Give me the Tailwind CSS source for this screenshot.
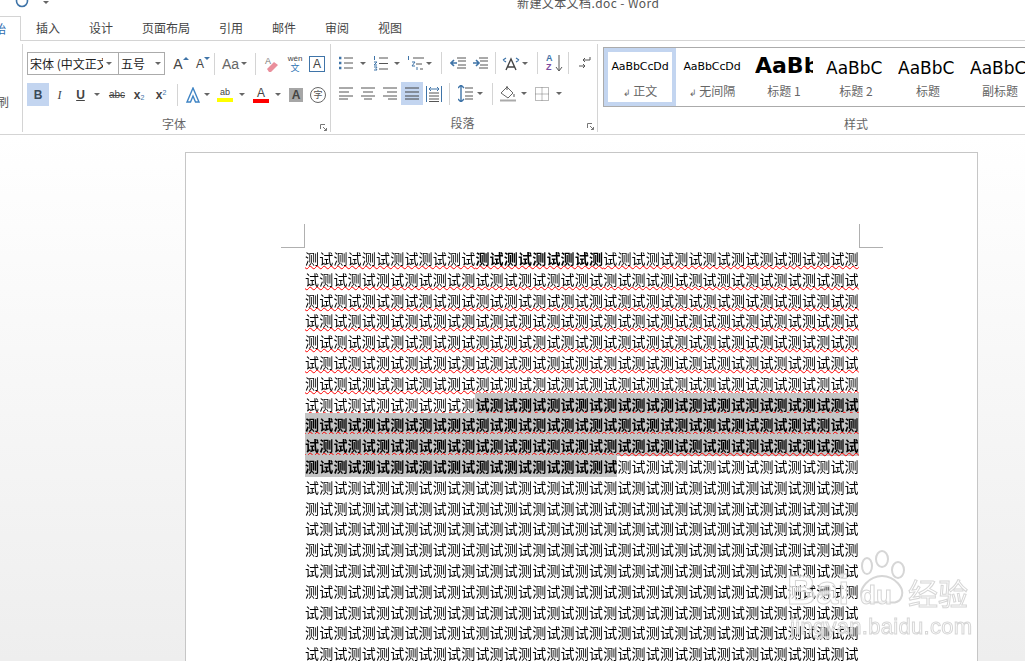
<!DOCTYPE html>
<html lang="zh-CN">
<head>
<meta charset="UTF-8" />
<title>新建文本文档.doc - Word</title>
<script src="https://cdn.jsdelivr.net/npm/@tailwindcss/browser@4"></script>
</head>
<body class="bg-white">
<div class="relative w-[1025px] h-[661px] overflow-hidden flex flex-col text-[#444] font-['Noto_Sans_CJK_SC','Noto_Sans',sans-serif]">

  <!-- title bar -->
  <div class="h-[16px] shrink-0 flex overflow-hidden">
    <svg class="ml-[15px] -mt-[8px] w-[14px] h-[16px]" viewBox="0 0 14 16" fill="none" stroke="#3f74a8" stroke-width="1.6"><circle cx="7" cy="9" r="5.5"/></svg>
    <div class="ml-[13px] -mt-[1px] w-[8px] flex flex-col items-center gap-[1px]">
      <div class="w-[6px] h-[1px] bg-[#666]"></div>
      <div class="w-0 h-0 border-x-[3px] border-x-transparent border-t-[3px] border-t-[#666]"></div>
    </div>
    <div class="ml-[467px] -mt-[3px] text-[12px] leading-[12px] text-[#555] tracking-[0.4px] whitespace-nowrap">新建文本文档.doc - Word</div>
  </div>

  <!-- tabs -->
  <div class="h-[25px] shrink-0 flex text-[12px] leading-[24px] text-[#444]">
    <div class="w-[21px] h-[25px] bg-white border-r border-t border-[#d4d4d4] overflow-hidden text-[#2b6cb0] relative z-10"><span class="block -ml-[6px] whitespace-nowrap">始</span></div>
    <div class="ml-[15px] w-[53px]">插入</div>
    <div class="w-[53px]">设计</div>
    <div class="w-[77px]">页面布局</div>
    <div class="w-[53px]">引用</div>
    <div class="w-[53px]">邮件</div>
    <div class="w-[53px]">审阅</div>
    <div class="w-[48px]">视图</div>
  </div>

  <!-- ribbon -->
  <div class="h-[95px] shrink-0 -mt-[1px] border-t border-b border-[#d4d4d4] flex bg-white">

    <!-- clipboard -->
    <div class="w-[23px] h-[88px] mt-[3px] border-r border-[#d4d4d4] overflow-hidden relative">
      <div class="mt-[50px] -ml-[3px] text-[12px] leading-[16px] text-[#555]">刷</div>
    </div>

    <!-- font -->
    <div class="w-[308px] h-[88px] mt-[3px] border-r border-[#d4d4d4] pl-[4px] flex flex-col">
      <div class="h-[23px] mt-[8px] flex items-center">
        <div class="w-[92px] h-[23px] border border-[#ababab] flex items-center overflow-hidden">
          <span class="ml-[2px] w-[73px] overflow-hidden whitespace-nowrap text-[12px] text-[#222]">宋体 (中文正文)</span>
          <span class="ml-[3px] w-0 h-0 border-x-[3px] border-x-transparent border-t-[3px] border-t-[#666]"></span>
        </div>
        <div class="-ml-[1px] w-[47px] h-[23px] border border-[#ababab] flex items-center">
          <span class="ml-[2px] w-[34px] text-[12px] text-[#222]">五号</span>
          <span class="w-0 h-0 border-x-[3px] border-x-transparent border-t-[3px] border-t-[#666]"></span>
        </div>
        <div class="ml-[5px] w-[22px] flex items-start justify-center text-[14px] leading-[16px] font-['Liberation_Sans']"><span>A</span><span class="mt-[1px] w-0 h-0 border-x-[3px] border-x-transparent border-b-[3px] border-b-[#3f74a8]"></span></div>
        <div class="w-[22px] flex items-start justify-center text-[12px] leading-[16px] mt-[1px] font-['Liberation_Sans']"><span>A</span><span class="mt-[1px] w-0 h-0 border-x-[3px] border-x-transparent border-t-[3px] border-t-[#3f74a8]"></span></div>
        <div class="w-px h-[22px] bg-[#d4d4d4]"></div>
        <div class="ml-[7px] w-[16px] text-[14px] leading-[16px] text-[#666] font-['Liberation_Sans']">Aa</div>
        <span class="ml-[3px] w-0 h-0 border-x-[3px] border-x-transparent border-t-[3px] border-t-[#666]"></span>
        <div class="ml-[8px] w-px h-[22px] bg-[#d4d4d4]"></div>
        <svg class="ml-[8px] w-[16px] h-[18px]" viewBox="0 0 16 18"><text x="1" y="9" font-size="9" fill="#777" font-family="Liberation Sans">A</text><path d="M3 14l7-7 4 3-7 7H5z" fill="#ea8f9c"/></svg>
        <div class="ml-[6px] w-[18px] flex flex-col items-center text-[8px] leading-[8px]"><span class="text-[#444] font-['Liberation_Sans']">wén</span><span class="text-[#2f75b5] text-[9px] leading-[9px]">文</span></div>
        <div class="ml-[5px] w-[16px] h-[16px] border border-[#3f74a8] flex items-center justify-center text-[12px] leading-none text-[#444] font-['Liberation_Sans']">A</div>
      </div>
      <div class="h-[23px] mt-[8px] flex items-center font-['Liberation_Sans']">
        <div class="w-[22px] h-[23px] bg-[#c3d5f0] flex items-center justify-center text-[12px] font-bold text-[#3a4a5a]">B</div>
        <div class="w-[21px] text-center text-[12px] italic font-['Liberation_Serif']">I</div>
        <div class="w-[21px] text-center text-[12px] font-bold underline">U</div>
        <span class="ml-[3px] w-0 h-0 border-x-[3px] border-x-transparent border-t-[3px] border-t-[#666]"></span>
        <div class="ml-[6px] w-[22px] text-center text-[10px] line-through">abc</div>
        <div class="w-[22px] text-center text-[12px] font-bold">x<sub class="text-[7px] text-[#3f74a8] font-normal">2</sub></div>
        <div class="w-[22px] text-center text-[12px] font-bold">x<sup class="text-[7px] text-[#3f74a8] font-normal">2</sup></div>
        <div class="ml-[5px] w-px h-[22px] bg-[#d4d4d4]"></div>
        <svg class="ml-[7px] w-[16px] h-[16px]" viewBox="0 0 16 16"><path d="M2 15L8 1l6 14h-3.500l-2.500-6-2.500 6z" fill="#fff" stroke="#3f84c4" stroke-width="1.400"/></svg>
        <span class="ml-[3px] w-0 h-0 border-x-[3px] border-x-transparent border-t-[3px] border-t-[#666]"></span>
        <div class="ml-[7px] w-[16px] flex flex-col items-center">
          <span class="text-[9px] leading-[11px] text-[#444]">ab</span>
          <span class="w-[16px] h-[4px] bg-[#ffff00]"></span>
        </div>
        <span class="ml-[6px] w-0 h-0 border-x-[3px] border-x-transparent border-t-[3px] border-t-[#666]"></span>
        <div class="ml-[8px] w-[16px] flex flex-col items-center">
          <span class="text-[12px] leading-[12px] text-[#444]">A</span>
          <span class="w-[16px] h-[4px] bg-[#ff0000]"></span>
        </div>
        <span class="ml-[6px] w-0 h-0 border-x-[3px] border-x-transparent border-t-[3px] border-t-[#666]"></span>
        <div class="ml-[8px] w-[14px] h-[14px] bg-[#a6a6a6] flex items-center justify-center text-[12px] font-bold text-[#444]">A</div>
        <div class="ml-[7px] w-[16px] h-[16px] rounded-full border border-[#666] flex items-center justify-center text-[9px] text-[#555] font-['Noto_Sans_CJK_SC']">字</div>
      </div>
      <div class="relative mt-[9px] h-[18px] text-center text-[12px] leading-[18px] text-[#666] pr-[9px]">字体
        <svg class="absolute right-[3px] top-[9px] w-[7px] h-[7px]" viewBox="0 0 7 7" fill="none" stroke="#777"><path d="M.5 5V.5H5M3 3l3.500 3.500M6.500 4v2.500H4"/></svg>
      </div>
    </div>

    <!-- paragraph -->
    <div class="w-[267px] h-[88px] mt-[3px] border-r border-[#d4d4d4] flex flex-col">
      <div class="h-[23px] mt-[8px] flex items-center">
        <svg class="ml-[8px] w-[14px] h-[14px]" viewBox="0 0 14 14" stroke="#555"><path d="M5 2h9M5 7h9M5 12h9"/><path stroke="#3f74a8" stroke-width="2.400" d="M0 2h2.400M0 7h2.400M0 12h2.400"/></svg>
        <span class="ml-[7px] w-0 h-0 border-x-[3px] border-x-transparent border-t-[3px] border-t-[#666]"></span>
        <svg class="ml-[7px] w-[15px] h-[15px]" viewBox="0 0 15 15" stroke="#555"><path d="M6 2h9M6 7.500h9M6 13h9"/><path stroke="#3f74a8" fill="none" d="M1.500 0v4M1 6h3L1 9h3M1 11h3l-1 1.500 1 1.500H1"/></svg>
        <span class="ml-[6px] w-0 h-0 border-x-[3px] border-x-transparent border-t-[3px] border-t-[#666]"></span>
        <svg class="ml-[7px] w-[17px] h-[15px]" viewBox="0 0 17 15" stroke="#555"><path d="M6 2h11M9 8h6M13 13h3"/><path stroke="#3f74a8" fill="none" d="M1.500 0v4M5 6h3L5 10h3M10 11v3"/></svg>
        <span class="ml-[2px] w-0 h-0 border-x-[3px] border-x-transparent border-t-[3px] border-t-[#666]"></span>
        <div class="ml-[9px] w-px h-[22px] bg-[#d4d4d4]"></div>
        <svg class="ml-[8px] w-[16px] h-[12px]" viewBox="0 0 16 12" stroke="#555"><path d="M7 1h9M8 4h8M8 8h8M7 11h9"/><path stroke="#3f74a8" stroke-width="1.600" d="M7 6H1M4 3L1 6l3 3" fill="none"/></svg>
        <svg class="ml-[6px] w-[16px] h-[12px]" viewBox="0 0 16 12" stroke="#555"><path d="M7 1h9M8 4h8M8 8h8M7 11h9"/><path stroke="#3f74a8" stroke-width="1.600" d="M1 6h6M4 3l3 3-3 3" fill="none"/></svg>
        <div class="ml-[7px] w-px h-[22px] bg-[#d4d4d4]"></div>
        <svg class="ml-[6px] w-[18px] h-[15px]" viewBox="0 0 18 15" fill="none"><path d="M4 14L9 3l5 11M5.500 11h7" stroke="#444" stroke-width="1.400"/><path d="M1 4l3-2M1 4l3 2M17 4l-3-2M17 4l-3 2" stroke="#3f74a8" stroke-width="1.200"/></svg>
        <span class="ml-[2px] w-0 h-0 border-x-[3px] border-x-transparent border-t-[3px] border-t-[#666]"></span>
        <div class="ml-[9px] w-px h-[22px] bg-[#d4d4d4]"></div>
        <div class="ml-[8px] w-[9px] flex flex-col text-[9px] leading-[9px] font-['Liberation_Sans'] font-bold"><span class="text-[#3f74a8]">A</span><span class="text-[#7b4a9e]">Z</span></div>
        <svg class="w-[8px] h-[17px]" viewBox="0 0 8 17" fill="none" stroke="#555"><path d="M4 0v15M1 12l3 4 3-4"/></svg>
        <div class="ml-[5px] w-px h-[22px] bg-[#d4d4d4]"></div>
        <svg class="ml-[10px] w-[12px] h-[14px]" viewBox="0 0 12 14" fill="none" stroke="#555"><path d="M11 1v3H4M6 2L4 4l2 2"/><path d="M0 10h6M4 8l2 2-2 2"/></svg>
      </div>
      <div class="h-[23px] mt-[8px] flex items-center">
        <svg class="ml-[8px] w-[14px] h-[13px]" viewBox="0 0 14 13" stroke="#555"><path d="M0 1h14M0 5h10M0 9h14M0 12h9"/></svg>
        <svg class="ml-[8px] w-[14px] h-[13px]" viewBox="0 0 14 13" stroke="#555"><path d="M0 1h14M2 5h10M0 9h14M3 12h8"/></svg>
        <svg class="ml-[8px] w-[14px] h-[13px]" viewBox="0 0 14 13" stroke="#555"><path d="M0 1h14M4 5h10M0 9h14M5 12h9"/></svg>
        <div class="ml-[4px] w-[22px] h-[23px] bg-[#c3d5f0] flex items-center justify-center">
          <svg class="w-[14px] h-[13px]" viewBox="0 0 14 13" stroke="#444"><path d="M0 1h14M0 5h14M0 9h14M0 12h14"/></svg>
        </div>
        <svg class="ml-[3px] w-[16px] h-[16px]" viewBox="0 0 16 16" fill="none" stroke="#555"><path d="M3 7h10M3 10h10M3 13h10M3 15.500h10"/><path stroke="#3f74a8" d="M.5 0v16M15.500 0v16M3 3h10M5 1L3 3l2 2M11 1l2 2-2 2"/></svg>
        <div class="ml-[7px] w-px h-[22px] bg-[#d4d4d4]"></div>
        <svg class="ml-[8px] w-[15px] h-[17px]" viewBox="0 0 15 17" fill="none" stroke="#555"><path d="M7 3h8M7 7h8M7 11h8M7 14h8"/><path stroke="#3f74a8" stroke-width="1.400" d="M3 0v17M0 3l3-3 3 3M0 14l3 3 3-3"/></svg>
        <span class="ml-[4px] w-0 h-0 border-x-[3px] border-x-transparent border-t-[3px] border-t-[#666]"></span>
        <div class="ml-[9px] w-px h-[22px] bg-[#d4d4d4]"></div>
        <svg class="ml-[7px] w-[16px] h-[17px]" viewBox="0 0 16 17" fill="none" stroke="#666"><path d="M1 8l6-6 6 6-5 5z"/><path d="M7 1v4M14 9v3" stroke="#555"/><path d="M0 15.500h16" stroke-width="2" stroke="#aaa"/></svg>
        <span class="ml-[5px] w-0 h-0 border-x-[3px] border-x-transparent border-t-[3px] border-t-[#666]"></span>
        <svg class="ml-[8px] w-[14px] h-[14px]" viewBox="0 0 14 14" fill="none" stroke="#777" stroke-dasharray="1 1"><path d="M.5.500h13v13H.500zM7 .500v13M.500 7h13"/></svg>
        <span class="ml-[7px] w-0 h-0 border-x-[3px] border-x-transparent border-t-[3px] border-t-[#666]"></span>
      </div>
      <div class="relative mt-[9px] h-[18px] text-center text-[12px] leading-[18px] text-[#666] pr-[3px]">段落
        <svg class="absolute right-[3px] top-[9px] w-[7px] h-[7px]" viewBox="0 0 7 7" fill="none" stroke="#777"><path d="M.5 5V.5H5M3 3l3.500 3.500M6.500 4v2.500H4"/></svg>
      </div>
    </div>

    <!-- styles -->
    <div class="flex-1 min-w-0 flex flex-col pl-[5px] overflow-hidden">
      <div class="mt-[6px] h-[60px] w-[430px] border border-[#ababab] flex text-[#666]">
        <div class="w-[72px] h-[58px] shrink-0 border-[4px] border-[#c3d5f0] flex flex-col items-center">
          <div class="h-[29px] text-[11px] leading-[30px] text-black font-['DejaVu_Sans'] tracking-[-0.1px] whitespace-nowrap">AaBbCcDd</div>
          <div class="text-[12px] leading-[20px]"><span class="text-[9px]">↲</span> 正文</div>
        </div>
        <div class="w-[72px] h-[58px] shrink-0 flex flex-col items-center pt-[4px]">
          <div class="h-[29px] text-[11px] leading-[30px] text-black font-['DejaVu_Sans'] tracking-[-0.1px] whitespace-nowrap">AaBbCcDd</div>
          <div class="text-[12px] leading-[20px]"><span class="text-[9px]">↲</span> 无间隔</div>
        </div>
        <div class="w-[72px] h-[58px] shrink-0 flex flex-col items-center pt-[4px]">
          <div class="h-[29px] w-[58px] overflow-hidden text-[22px] leading-[28px] font-bold text-black font-['DejaVu_Sans'] whitespace-nowrap">AaBbCc</div>
          <div class="text-[12px] leading-[20px]">标题 1</div>
        </div>
        <div class="w-[72px] h-[58px] shrink-0 flex flex-col items-center pt-[4px]">
          <div class="h-[29px] w-[60px] overflow-hidden text-[17px] leading-[32px] text-black font-['DejaVu_Sans'] whitespace-nowrap">AaBbC</div>
          <div class="text-[12px] leading-[20px]">标题 2</div>
        </div>
        <div class="w-[72px] h-[58px] shrink-0 flex flex-col items-center pt-[4px]">
          <div class="h-[29px] w-[60px] overflow-hidden text-[17px] leading-[32px] text-black font-['DejaVu_Sans'] whitespace-nowrap">AaBbC</div>
          <div class="text-[12px] leading-[20px]">标题</div>
        </div>
        <div class="w-[72px] h-[58px] shrink-0 flex flex-col items-center pt-[4px]">
          <div class="h-[29px] w-[60px] overflow-hidden text-[17px] leading-[32px] text-black font-['DejaVu_Sans'] whitespace-nowrap">AaBbCc</div>
          <div class="text-[12px] leading-[20px]">副标题</div>
        </div>
      </div>
      <div class="mt-[8px] w-[486px] pl-[241px] text-[12px] leading-[18px] text-[#666]">样式</div>
    </div>
  </div>

  <!-- document -->
  <div class="flex-1 min-h-0 bg-gradient-to-b from-white to-[#eeeeee] pt-[17px] pl-[185px]">
    <div class="w-[793px] h-[600px] bg-white border border-[#c6c6c6] pl-[95px] pt-[71px]">
      <div class="w-[602px] flex justify-between">
        <div class="w-[24px] h-[24px] border-r border-b border-[#b0b0b0]"></div>
        <div class="w-[24px] h-[24px] border-l border-b border-[#b0b0b0]"></div>
      </div>
      <div class="ml-[24px] w-[560px] text-[14px] leading-[20.8px] tracking-[0.2px] text-black whitespace-nowrap will-change-transform">
        <p class="underline decoration-wavy decoration-[#ff0000] decoration-[1px] underline-offset-[1px]">测试测试测试测试测试测试<span class="font-bold">测试测试测试测试测</span>试测试测试测试测试测试测试测试测试测</p>
        <p class="underline decoration-wavy decoration-[#ff0000] decoration-[1px] underline-offset-[1px]">试测试测试测试测试测试测试测试测试测试测试测试测试测试测试测试测试测试测试测试</p>
        <p class="underline decoration-wavy decoration-[#ff0000] decoration-[1px] underline-offset-[1px]">测试测试测试测试测试测试测试测试测试测试测试测试测试测试测试测试测试测试测试测</p>
        <p class="underline decoration-wavy decoration-[#ff0000] decoration-[1px] underline-offset-[1px]">试测试测试测试测试测试测试测试测试测试测试测试测试测试测试测试测试测试测试测试</p>
        <p class="underline decoration-wavy decoration-[#ff0000] decoration-[1px] underline-offset-[1px]">测试测试测试测试测试测试测试测试测试测试测试测试测试测试测试测试测试测试测试测</p>
        <p class="underline decoration-wavy decoration-[#ff0000] decoration-[1px] underline-offset-[1px]">试测试测试测试测试测试测试测试测试测试测试测试测试测试测试测试测试测试测试测试</p>
        <p class="underline decoration-wavy decoration-[#ff0000] decoration-[1px] underline-offset-[1px]">测试测试测试测试测试测试测试测试测试测试测试测试测试测试测试测试测试测试测试测</p>
        <p class="underline decoration-wavy decoration-[#ff0000] decoration-[1px] underline-offset-[1px]">试测试测试测试测试测试测<span class="font-bold bg-[#c4c4c4] py-px">试测试测试测试测试测试测试测试测试测试测试测试测试测试</span></p>
        <p class="underline decoration-wavy decoration-[#ff0000] decoration-[1px] underline-offset-[1px]"><span class="font-bold bg-[#c4c4c4] py-px">测试测试测试测试测试测试测试测试测试测试测试测试测试测试测试测试测试测试测试测</span></p>
        <p class="underline decoration-wavy decoration-[#ff0000] decoration-[1px] underline-offset-[1px]"><span class="font-bold bg-[#c4c4c4] py-px">试测试测试测试测试测试测试测试测试测试测试测试测试测试测试测试测试测试测试测试</span></p>
        <p><span class="font-bold bg-[#c4c4c4] py-px">测试测试测试测试测试测试测试测试测试测试测试</span>测试测试测试测试测试测试测试测试测</p>
        <p>试测试测试测试测试测试测试测试测试测试测试测试测试测试测试测试测试测试测试测试</p>
        <p>测试测试测试测试测试测试测试测试测试测试测试测试测试测试测试测试测试测试测试测</p>
        <p>试测试测试测试测试测试测试测试测试测试测试测试测试测试测试测试测试测试测试测试</p>
        <p>测试测试测试测试测试测试测试测试测试测试测试测试测试测试测试测试测试测试测试测</p>
        <p>试测试测试测试测试测试测试测试测试测试测试测试测试测试测试测试测试测试测试测试</p>
        <p>测试测试测试测试测试测试测试测试测试测试测试测试测试测试测试测试测试测试测试测</p>
        <p>试测试测试测试测试测试测试测试测试测试测试测试测试测试测试测试测试测试测试测试</p>
        <p>测试测试测试测试测试测试测试测试测试测试测试测试测试测试测试测试测试测试测试测</p>
        <p>试测试测试测试测试测试测试测试测试测试测试测试测试测试测试测试测试测试测试测试</p>
      </div>
    </div>
  </div>

  <!-- watermark -->
  <div class="absolute left-[790px] top-[550px] w-[190px] h-[95px] pointer-events-none text-white/70 [-webkit-text-stroke:1px_#d6d6d6]">
    <svg class="absolute left-[68px] top-[0px] w-[50px] h-[56px]" viewBox="0 0 50 56" fill="rgba(255,255,255,.6)" stroke="#d6d6d6" stroke-width="2"><ellipse cx="9" cy="16" rx="5" ry="8"/><ellipse cx="24" cy="9" rx="6" ry="8"/><ellipse cx="40" cy="20" rx="6" ry="8"/><path d="M4 48c-4-10 8-22 20-22s24 12 19 22c-3 7-13 4-19 4s-17 3-20-4z"/></svg>
    <div class="absolute -left-[3px] top-[18px] text-[40px] leading-[44px] font-bold font-['Liberation_Sans']">Bai</div>
    <div class="absolute left-[70px] top-[30px] text-[26px] leading-[30px] font-bold font-['Liberation_Sans']">du</div>
    <div class="absolute left-[118px] top-[24px] text-[30px] leading-[36px] whitespace-nowrap">经验</div>
    <div class="absolute left-[0px] top-[64px] text-[22px] leading-[26px] tracking-[0.3px] whitespace-nowrap font-['Liberation_Sans']">jingyan.baidu.com</div>
  </div>
</div>
</body>
</html>
